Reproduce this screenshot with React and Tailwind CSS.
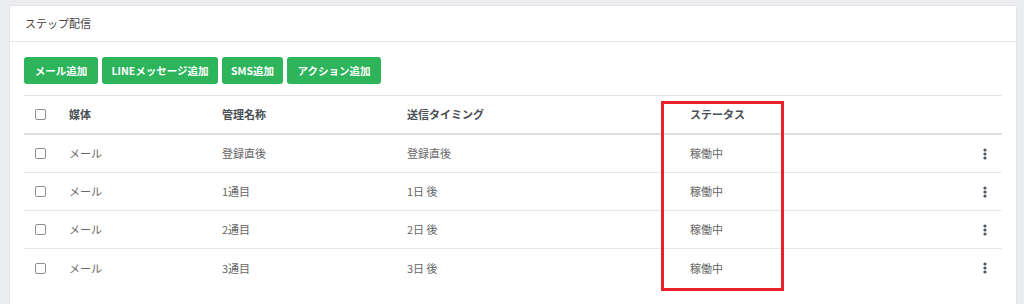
import React from "react";

const font = { fontFamily: '"Noto Sans CJK JP", "Noto Sans", sans-serif' };

function Kebab() {
  return (
    <svg width="4" height="12" viewBox="0 0 4 12" className="block">
      <circle cx="2" cy="2" r="1.6" fill="#4b5563" />
      <circle cx="2" cy="6" r="1.6" fill="#4b5563" />
      <circle cx="2" cy="10" r="1.6" fill="#4b5563" />
    </svg>
  );
}

function Checkbox() {
  return <span className="block w-[11px] h-[11px] ml-[11px] border border-[#8f8f8f] rounded-[2px] bg-white" />;
}

const rows = [
  ["メール", "登録直後", "登録直後", "稼働中"],
  ["メール", "1通目", "1日 後", "稼働中"],
  ["メール", "2通目", "2日 後", "稼働中"],
  ["メール", "3通目", "3日 後", "稼働中"],
];

const cols = "grid grid-cols-[45px_153px_185px_283px_1fr_60px] items-center";

export default function App() {
  return (
    <div className="relative w-[1024px] h-[304px] overflow-hidden bg-[#ebedf0] pt-[5px] pl-[9px] pr-[7px]" style={font}>
      <div className="bg-white h-[299px] border border-[#e3e5e8] border-b-0">
        <div className="h-[36px] border-b border-[#e3e5e8] flex items-center pl-[15px] text-[11px] text-[#444]">
          ステップ配信
        </div>
        <div className="px-[14px] pt-[15px]">
          <div className="flex gap-[4px] h-[27px]">
            {[
              ["メール追加", "w-[74px]"],
              ["LINEメッセージ追加", "w-[116px]"],
              ["SMS追加", "w-[61px]"],
              ["アクション追加", "w-[94px]"],
            ].map(([t, w]) => (
              <div key={t} className={`${w} h-[27px] flex items-center justify-center rounded-[3px] bg-[#2eb45b] text-white text-[10.5px] font-bold`}>
                {t}
              </div>
            ))}
          </div>
          <div className="mt-[11px]">
            <div className={`${cols} h-[40px] border-t border-b-2 border-t-[#e3e5e8] border-b-[#dcdee3] text-[11px] font-bold text-[#4a4f55]`}>
              <Checkbox />
              <div>媒体</div>
              <div>管理名称</div>
              <div>送信タイミング</div>
              <div>ステータス</div>
              <div />
            </div>
            {rows.map((r, i) => (
              <div
                key={i}
                className={`${cols} h-[38px] text-[11px] text-[#666] ${i < rows.length - 1 ? "border-b border-[#e6e8eb]" : ""}`}
              >
                <Checkbox />
                <div>{r[0]}</div>
                <div>{r[1]}</div>
                <div>{r[2]}</div>
                <div>{r[3]}</div>
                <div className="flex justify-end pr-[15px]">
                  <Kebab />
                </div>
              </div>
            ))}
          </div>
        </div>
      </div>
      <div className="absolute left-[661px] top-[101px] w-[123px] h-[190px] border-[3px] border-[#e8212b]" />
    </div>
  );
}
